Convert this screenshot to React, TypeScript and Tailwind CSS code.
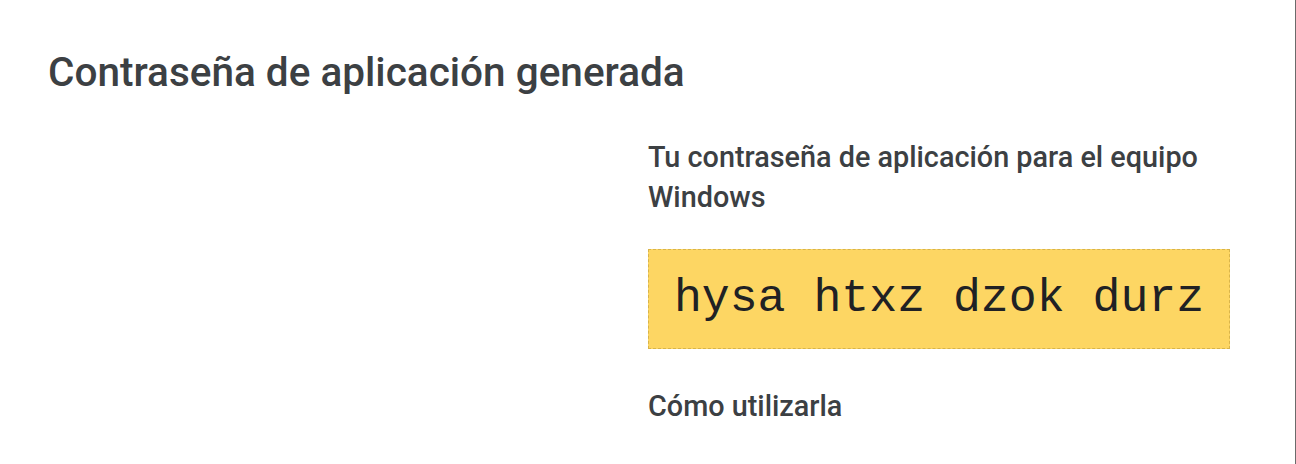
export default function App() {
  return (
    <div className="h-[464px] w-[1296px] overflow-hidden border-r border-[#6b6b6b] bg-white font-['Roboto',sans-serif] text-[#3c4043]">
      <div className="px-12 pt-[48px]">
        <h1 className="text-[40.5px] leading-[48px] font-medium">Contraseña de aplicación generada</h1>
      </div>
      <div className="mt-[41px] grid grid-cols-[648px_582px]">
        <div />
        <div>
          <p className="text-[28.8px] leading-[40px] font-medium">
            Tu contraseña de aplicación para el equipo Windows
          </p>
          <div className="mt-[32px] flex h-[100px] items-center justify-center border border-dashed border-[#d9b44a] bg-[#fdd663]">
            <span className="font-['Liberation_Mono',monospace] text-[46.5px] text-[#202124]">hysa htxz dzok durz</span>
          </div>
          <p className="mt-[37px] text-[28.8px] leading-[40px] font-medium">Cómo utilizarla</p>
        </div>
      </div>
    </div>
  );
}
